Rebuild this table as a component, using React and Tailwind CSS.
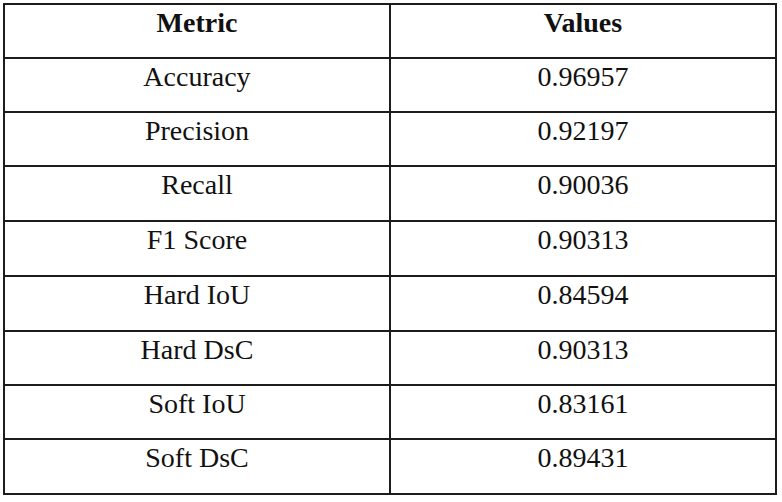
import React from "react";

const rows = [
  ["Accuracy", "0.96957"],
  ["Precision", "0.92197"],
  ["Recall", "0.90036"],
  ["F1 Score", "0.90313"],
  ["Hard IoU", "0.84594"],
  ["Hard DsC", "0.90313"],
  ["Soft IoU", "0.83161"],
  ["Soft DsC", "0.89431"],
];

const heights = ["h-[54px]", "h-[54px]", "h-[55px]", "h-[55px]", "h-[55px]", "h-[54px]", "h-[54px]", "h-[55px]"];

export default function App() {
  return (
    <div
      className="w-[782px] h-[502px] bg-white pl-[3px] pt-[3px] text-[#111] text-[28px] leading-[31px]"
      style={{ fontFamily: '"Liberation Serif", "Times New Roman", serif' }}
    >
      <div className="w-[774px] border-2 border-[#1c1c1c] flex flex-col">
        <div className="flex h-[52px] font-bold">
          <div className="w-[384px] text-center pt-[2px]">Metric</div>
          <div className="w-[386px] border-l-2 border-[#1c1c1c] text-center pt-[2px]">Values</div>
        </div>
        {rows.map(([m, v], i) => (
          <div key={m} className={"flex border-t-2 border-[#1c1c1c] " + heights[i]}>
            <div className="w-[384px] text-center pt-[2px]">{m}</div>
            <div className="w-[386px] border-l-2 border-[#1c1c1c] text-center pt-[2px]">{v}</div>
          </div>
        ))}
      </div>
    </div>
  );
}
